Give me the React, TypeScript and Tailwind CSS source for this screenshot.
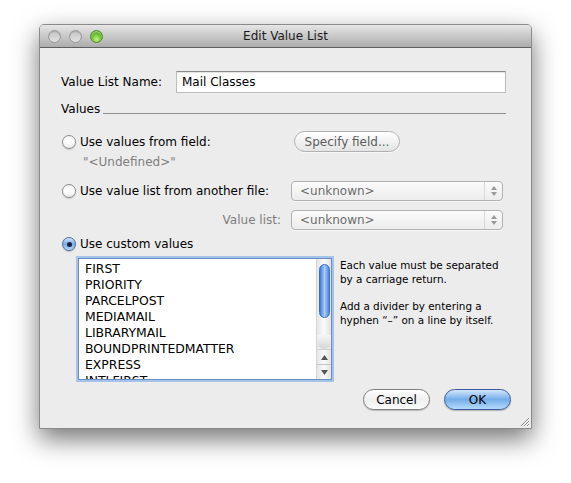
import React from "react";

const items = [
  "FIRST",
  "PRIORITY",
  "PARCELPOST",
  "MEDIAMAIL",
  "LIBRARYMAIL",
  "BOUNDPRINTEDMATTER",
  "EXPRESS",
  "INTLFIRST",
];

function Radio({ checked = false }: { checked?: boolean }) {
  if (checked) {
    return (
      <span className="flex h-[14px] w-[14px] items-center justify-center rounded-full border border-[#4f6f9f] bg-gradient-to-b from-[#d2e4f8] via-[#79ace8] to-[#b7d6f6] shadow-[0_1px_1px_rgba(0,0,0,0.2)]">
        <span className="h-[5px] w-[5px] rounded-full bg-[#15233b]" />
      </span>
    );
  }
  return (
    <span className="h-[14px] w-[14px] rounded-full border border-[#8a8a8a] bg-gradient-to-b from-[#f4f4f4] via-[#ffffff] to-[#e9e9e9] shadow-[0_1px_1px_rgba(0,0,0,0.15)]" />
  );
}

function Popup({ label }: { label: string }) {
  return (
    <div className="flex h-[20px] w-[212px] items-center rounded-[4px] border border-[#b2b2b2] bg-gradient-to-b from-[#fbfbfb] to-[#ececec] shadow-[0_1px_0_rgba(255,255,255,0.6)]">
      <span className="flex-1 pl-[8px] text-[12px] leading-none text-[#6c6c6c]">{label}</span>
      <span className="flex h-full w-[18px] flex-col items-center justify-center gap-[2px] border-l border-[#d8d8d8]">
        <svg width="6" height="4" viewBox="0 0 6 4">
          <path d="M3 0 L6 4 L0 4 Z" fill="#9a9a9a" />
        </svg>
        <svg width="6" height="4" viewBox="0 0 6 4">
          <path d="M0 0 L6 0 L3 4 Z" fill="#9a9a9a" />
        </svg>
      </span>
    </div>
  );
}

function TrafficLight({ green = false }: { green?: boolean }) {
  if (green) {
    return (
      <span className="h-[13px] w-[13px] rounded-full border border-[#4d8a26] bg-[radial-gradient(circle_at_50%_75%,#c4f48a_0%,#74c43a_45%,#4d9a1c_100%)] shadow-[inset_0_1px_1px_rgba(255,255,255,0.5)]" />
    );
  }
  return (
    <span className="h-[13px] w-[13px] rounded-full border border-[#999999] bg-gradient-to-b from-[#c4c4c4] to-[#e2e2e2] shadow-[inset_0_1px_1px_rgba(0,0,0,0.15)]" />
  );
}

export default function App() {
  return (
    <div className="h-[483px] w-[571px] bg-white pl-[39px] pt-[24px] font-['DejaVu_Sans',sans-serif] text-[12px] text-black">
      <div className="relative flex h-[405px] w-[493px] flex-col rounded-t-[5px] border border-[#8a8a8a] bg-[#ececec] shadow-[0_10px_26px_rgba(0,0,0,0.55)]">
        {/* title bar */}
        <div className="relative flex h-[23px] items-center rounded-t-[4px] border-b border-[#5f5f5f] bg-gradient-to-b from-[#e6e6e6] to-[#acacac] pl-[8px]">
          <div className="flex items-center gap-[8px]">
            <TrafficLight />
            <TrafficLight />
            <TrafficLight green />
          </div>
          <div className="absolute inset-0 flex items-center justify-center text-[12px] text-[#1a1a1a]">
            Edit Value List
          </div>
        </div>

        <div className="flex flex-1 flex-col pl-[21px] pr-[20px] pt-[23px]">
          {/* name */}
          <div className="mr-[5px] flex h-[22px] items-center">
            <span className="w-[115px]">Value List Name:</span>
            <div className="flex h-[22px] flex-1 items-center border border-[#bdbdbd] border-t-[#8c8c8c] bg-white pl-[5px] shadow-[inset_0_1px_1px_rgba(0,0,0,0.12)]">
              Mail Classes
            </div>
          </div>

          {/* group label */}
          <div className="mr-[5px] mt-[8px] flex h-[16px] items-end">
            <span className="leading-[16px]">Values</span>
            <span className="mb-[3px] ml-[3px] h-px flex-1 bg-[#8e8e8e]" />
          </div>

          {/* from field */}
          <div className="mt-[14px] flex h-[21px] items-center">
            <div className="flex w-[230px] items-center gap-[4px] pl-[1px]">
              <Radio />
              <span>Use values from field:</span>
            </div>
            <button className="ml-[3px] h-[21px] w-[106px] rounded-full border border-[#b0b0b0] bg-gradient-to-b from-[#ffffff] via-[#f1f1f1] to-[#e4e4e4] text-[12px] text-[#5c5c5c] shadow-[0_1px_0_rgba(255,255,255,0.7)]">
              Specify field...
            </button>
          </div>
          <div className="mt-[2px] flex h-[16px] items-center pl-[22px] text-[#7e7e7e]">
            "&lt;Undefined&gt;"
          </div>

          {/* another file */}
          <div className="mt-[11px] flex h-[20px] items-center">
            <div className="flex w-[230px] items-center gap-[4px] pl-[1px]">
              <Radio />
              <span>Use value list from another file:</span>
            </div>
            <Popup label="<unknown>" />
          </div>
          <div className="mt-[9px] flex h-[20px] items-center">
            <span className="w-[230px] pr-[10px] text-right text-[#7e7e7e]">Value list:</span>
            <Popup label="<unknown>" />
          </div>

          {/* custom */}
          <div className="mt-[6px] flex h-[16px] items-center gap-[4px] pl-[1px]">
            <Radio checked />
            <span>Use custom values</span>
          </div>

          <div className="mt-[6px] flex">
            <div className="ml-[17px] flex h-[122px] w-[254px] overflow-hidden border border-[#6d8fbf] bg-white shadow-[0_0_0_2px_#a3c3ea]">
              <div className="flex-1 overflow-hidden pl-[6px] pt-[2px] text-[12.4px] leading-[16px]">
                {items.map((it) => (
                  <div key={it}>{it}</div>
                ))}
              </div>
              {/* scrollbar */}
              <div className="flex w-[15px] flex-col border-l border-[#d4d4d4] bg-gradient-to-r from-[#e6e6e6] via-[#fafafa] to-[#e2e2e2]">
                <div className="relative flex-1">
                  <div className="mx-auto mt-[5px] h-[54px] w-[11px] rounded-full border border-[#3d6fc0] bg-gradient-to-r from-[#3b78dc] via-[#a8cdf6] to-[#4a86e0]" />
                  <div className="absolute bottom-0 left-0 right-0 h-[14px] rounded-b-full bg-gradient-to-b from-[#f6f6f6] to-[#d6d6d6]" />
                </div>
                <div className="flex h-[15px] items-center justify-center border-t border-[#d0d0d0]">
                  <svg width="7" height="5" viewBox="0 0 7 5">
                    <path d="M3.5 0 L7 5 L0 5 Z" fill="#555" />
                  </svg>
                </div>
                <div className="flex h-[15px] items-center justify-center border-t border-[#c6c6c6]">
                  <svg width="7" height="5" viewBox="0 0 7 5">
                    <path d="M0 0 L7 0 L3.5 5 Z" fill="#555" />
                  </svg>
                </div>
              </div>
            </div>
            <div className="ml-[8px] text-[10.4px] leading-[14px]">
              <div>Each value must be separated</div>
              <div>by a carriage return.</div>
              <div className="mt-[13px]">Add a divider by entering a</div>
              <div>hyphen “–” on a line by itself.</div>
            </div>
          </div>

          {/* buttons */}
          <div className="mt-[9px] flex justify-end gap-[14px]">
            <button className="h-[21px] w-[67px] rounded-full border border-[#7e7e7e] bg-gradient-to-b from-[#ffffff] via-[#f0f0f0] to-[#fbfbfb] text-[12px] shadow-[0_1px_1px_rgba(0,0,0,0.2)]">
              Cancel
            </button>
            <button className="h-[21px] w-[67px] rounded-full border border-[#3b5a9c] bg-gradient-to-b from-[#d3e7fc] via-[#74ade9] to-[#b4dafc] text-[12px] shadow-[0_1px_1px_rgba(0,0,0,0.25)]">
              OK
            </button>
          </div>
        </div>

        {/* resize grip */}
        <svg className="absolute bottom-[1px] right-[1px]" width="11" height="11" viewBox="0 0 11 11">
          <path d="M10 2 L2 10 M10 5 L5 10 M10 8 L8 10" stroke="#8a8a8a" strokeWidth="1" />
          <path d="M11 2 L3 10 M11 5 L6 10 M11 8 L9 10" stroke="#ffffff" strokeWidth="0.8" opacity="0.8" />
        </svg>
      </div>
    </div>
  );
}
